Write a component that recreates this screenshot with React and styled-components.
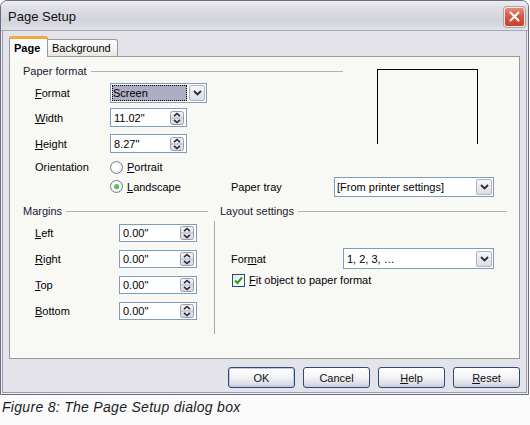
import React from 'react';
import styled, { createGlobalStyle, css } from 'styled-components';

const GlobalStyle = createGlobalStyle`
  html, body { margin: 0; padding: 0; background: #fafafa; }
  body {
    font-family: "Liberation Sans", Arial, sans-serif;
    font-size: 11px;
    color: #000;
  }
  #root { width: 530px; height: 425px; }
`;

const Page = styled.div`
  width: 530px;
  height: 425px;
  overflow: hidden;
  background: #fafafa;
`;

const Dialog = styled.div`
  width: 529px;
  height: 395px;
  box-sizing: border-box;
  border: 1px solid #6e6e82;
  border-radius: 7px 7px 0 0;
  background: #e3e3e9;
  display: flex;
  flex-direction: column;
  overflow: hidden;
  box-shadow: inset 0 0 0 1px #f0f0f4, inset 0 0 0 2px #9a9aac;
`;

const TitleBar = styled.div`
  height: 29px;
  flex: none;
  display: flex;
  align-items: center;
  justify-content: space-between;
  padding: 0 3px 0 7px;
  background: linear-gradient(#ececf2 0%, #dcdce5 30%, #d3d3dd 70%, #e2e2ea 100%);
  border-bottom: 1px solid #a6a6b6;
`;

const Title = styled.span`
  font-size: 13px;
  color: #101010;
  padding-top: 2px;
`;

const CloseButton = styled.div`
  width: 21px;
  height: 20px;
  margin-top: 2px;
  box-sizing: border-box;
  border: 1px solid #f4e8e4;
  border-radius: 3px;
  background: linear-gradient(#ea8a78, #d75a44 45%, #c4432e);
  display: flex;
  align-items: center;
  justify-content: center;
  box-shadow: 0 0 0 1px #b0a0a8;
`;

const Body = styled.div`
  flex: 1;
  display: flex;
  flex-direction: column;
  padding: 5px 8px 6px 8px;
  min-height: 0;
`;

const TabStrip = styled.div`
  display: flex;
  align-items: flex-end;
  height: 21px;
  margin-bottom: -1px;
  position: relative;
  z-index: 1;
`;

const Tab = styled.div`
  box-sizing: border-box;
  border: 1px solid #919b9c;
  border-bottom: none;
  padding-left: 4px;
  display: flex;
  align-items: center;
  ${(p) =>
    p.$active
      ? css`
          width: 39px;
          height: 21px;
          font-weight: bold;
          background: #fcfcfe;
          border-top: 3px solid #f2a93b;
          border-radius: 3px 3px 0 0;
          padding-bottom: 1px;
        `
      : css`
          width: 70px;
          height: 18px;
          border-left: none;
          background: linear-gradient(#ffffff, #f0f0ec 70%, #e6e6e0);
          border-radius: 0 3px 0 0;
          border-bottom: 1px solid #919b9c;
        `}
`;

const Panel = styled.div`
  flex: 1;
  box-sizing: border-box;
  border: 1px solid #919b9c;
  background: #f8f8f5;
  padding: 7px 0 0 13px;
  display: flex;
  flex-direction: column;
`;

const TopArea = styled.div`
  display: flex;
  align-items: flex-start;
`;

const Column = styled.div`
  width: ${(p) => p.$width}px;
  flex: none;
  display: flex;
  flex-direction: column;
  margin-left: ${(p) => p.$ml || 0}px;
`;

const SectionHeader = styled.div`
  height: 14px;
  display: flex;
  align-items: center;
  gap: 4px;
  padding-left: ${(p) => p.$pl || 0}px;
  color: #181830;
  white-space: nowrap;
  &::after {
    content: '';
    flex: 1;
    height: 1px;
    background: #b2b2ba;
    margin-top: 1px;
  }
`;

const Indent = styled.div`
  display: flex;
  flex-direction: column;
  padding-left: ${(p) => p.$pl ?? 12}px;
`;

const Row = styled.div`
  display: flex;
  align-items: center;
  height: ${(p) => p.$h}px;
  margin-top: ${(p) => p.$mt || 0}px;
`;

const Label = styled.span`
  width: ${(p) => p.$w}px;
  flex: none;
  white-space: nowrap;
`;

const Preview = styled.div`
  width: 101px;
  height: 75px;
  box-sizing: border-box;
  margin: 5px 0 0 34px;
  border: 1px solid #000;
  border-bottom: none;
`;

const LandscapeRow = styled.div`
  display: flex;
  align-items: center;
  height: 21px;
  padding-left: 12px;
`;

const BottomArea = styled.div`
  display: flex;
  margin-top: 7px;
`;

const LayoutBox = styled.div`
  margin-top: 3px;
  height: 113px;
  border-left: 1px solid #a8a8b0;
  padding-left: 16px;
  display: flex;
  flex-direction: column;
`;

const Field = styled.div`
  width: ${(p) => p.$w}px;
  height: ${(p) => p.$h}px;
  box-sizing: border-box;
  border: 1px solid #7f9db9;
  background: #fff;
  display: flex;
  align-items: center;
  flex: none;
`;

const FieldText = styled.span`
  flex: 1;
  padding-left: ${(p) => p.$pl ?? 3}px;
  white-space: nowrap;
  overflow: hidden;
`;

const FocusText = styled.span`
  flex: 1;
  align-self: stretch;
  margin: 1px;
  padding-left: 1px;
  display: flex;
  align-items: center;
  background: #adadc3;
  outline: 1px dotted #000;
  outline-offset: -1px;
`;

const DropButton = styled.div`
  width: 16px;
  height: 16px;
  margin: 0 1px;
  box-sizing: border-box;
  border: 1px solid #aeb2c8;
  border-radius: 2px;
  background: linear-gradient(#f6f6fa, #dcdce6);
  display: flex;
  align-items: center;
  justify-content: center;
  flex: none;
`;

const SpinBox = styled.div`
  width: 14px;
  height: 14px;
  margin-right: 2px;
  flex: none;
  display: flex;
`;

const RadioLabel = styled.label`
  display: flex;
  align-items: center;
  gap: 4px;
  width: ${(p) => p.$w || 'auto'};
  flex: none;
`;

const RadioCircle = styled.span`
  width: 13px;
  height: 13px;
  box-sizing: border-box;
  border-radius: 50%;
  border: 1px solid #7a7e90;
  background: radial-gradient(circle at 40% 40%, #ffffff 30%, #dcdce2 100%);
  display: flex;
  align-items: center;
  justify-content: center;
  &::after {
    content: '';
    display: ${(p) => (p.$checked ? 'block' : 'none')};
    width: 5px;
    height: 5px;
    border-radius: 50%;
    background: radial-gradient(circle at 40% 40%, #6fd56f, #1f9a1f);
  }
`;

const CheckRow = styled.label`
  display: flex;
  align-items: center;
  gap: 4px;
  height: 14px;
  margin-top: 4px;
  margin-left: 1px;
`;

const CheckBox = styled.span`
  width: 13px;
  height: 13px;
  box-sizing: border-box;
  border: 1px solid #1c5180;
  background: linear-gradient(135deg, #e8e8e0, #ffffff);
  display: flex;
  align-items: center;
  justify-content: center;
`;

const ButtonRow = styled.div`
  display: flex;
  justify-content: flex-end;
  gap: 8px;
  margin-top: 8px;
  height: 21px;
`;

const Button = styled.div`
  width: 67px;
  height: 21px;
  box-sizing: border-box;
  border: 1px solid #2c4a7c;
  border-radius: 3px;
  background: linear-gradient(#ffffff 0%, #f4f4f8 45%, #dcdce6 85%, #c8c8d8 100%);
  display: flex;
  align-items: center;
  justify-content: center;
  color: #111;
  ${(p) =>
    p.$default &&
    css`
      box-shadow: inset 0 0 0 1px #b8c8ec;
    `}
`;

const Caption = styled.div`
  margin-top: 4px;
  padding-left: 2px;
  font-style: italic;
  font-size: 14px;
  letter-spacing: 0.3px;
  color: #1a1a28;
  line-height: 16px;
`;

const Chevron = () => (
  <svg width="9" height="6" viewBox="0 0 9 6">
    <path d="M1 1 L4.5 4.5 L8 1" fill="none" stroke="#2a2a3a" strokeWidth="1.8" />
  </svg>
);

const SpinIcon = () => (
  <svg width="14" height="14" viewBox="0 0 14 14">
    <defs>
      <linearGradient id="spg" x1="0" y1="0" x2="0" y2="1">
        <stop offset="0" stopColor="#f4f4f8" />
        <stop offset="1" stopColor="#d6d6e0" />
      </linearGradient>
    </defs>
    <rect x="0.5" y="0.5" width="13" height="13" rx="2" fill="url(#spg)" stroke="#9c9cae" />
    <line x1="1" y1="7" x2="13" y2="7" stroke="#b4b4c4" />
    <path d="M4 5.2 L7 2.5 L10 5.2" fill="none" stroke="#2a2a3a" strokeWidth="1.6" />
    <path d="M4 8.8 L7 11.5 L10 8.8" fill="none" stroke="#2a2a3a" strokeWidth="1.6" />
  </svg>
);

const U = styled.span`
  text-decoration: underline;
  text-underline-offset: 1px;
`;

const Select = ({ w, h = 20, focused, pl, children }) => (
  <Field $w={w} $h={h}>
    {focused ? <FocusText>{children}</FocusText> : <FieldText $pl={pl}>{children}</FieldText>}
    <DropButton>
      <Chevron />
    </DropButton>
  </Field>
);

const SpinField = ({ w, h, value }) => (
  <Field $w={w} $h={h}>
    <FieldText>{value}</FieldText>
    <SpinBox>
      <SpinIcon />
    </SpinBox>
  </Field>
);

const margins = [
  { key: 'L', rest: 'eft' },
  { key: 'R', rest: 'ight' },
  { key: 'T', rest: 'op' },
  { key: 'B', rest: 'ottom' },
];

export default function App() {
  return (
    <Page>
      <GlobalStyle />
      <Dialog>
        <TitleBar>
          <Title>Page Setup</Title>
          <CloseButton>
            <svg width="11" height="11" viewBox="0 0 11 11">
              <path d="M1.5 1.5 L9.5 9.5 M9.5 1.5 L1.5 9.5" stroke="#fff" strokeWidth="2" strokeLinecap="round" />
            </svg>
          </CloseButton>
        </TitleBar>
        <Body>
          <TabStrip>
            <Tab $active>Page</Tab>
            <Tab>Background</Tab>
          </TabStrip>
          <Panel>
            <TopArea>
              <Column $width={320}>
                <SectionHeader>Paper format</SectionHeader>
                <Indent>
                  <Row $h={20} $mt={5}>
                    <Label $w={75}><U>F</U>ormat</Label>
                    <Select w={97} focused>Screen</Select>
                  </Row>
                  <Row $h={19} $mt={5}>
                    <Label $w={75}><U>W</U>idth</Label>
                    <SpinField w={77} h={19} value={'11.02"'} />
                  </Row>
                  <Row $h={19} $mt={7}>
                    <Label $w={75}><U>H</U>eight</Label>
                    <SpinField w={77} h={19} value={'8.27"'} />
                  </Row>
                  <Row $h={18} $mt={5}>
                    <Label $w={75}>Orientation</Label>
                    <RadioLabel>
                      <RadioCircle />
                      <span><U>P</U>ortrait</span>
                    </RadioLabel>
                  </Row>
                </Indent>
              </Column>
              <Preview />
            </TopArea>
            <LandscapeRow>
              <Label $w={75} />
              <RadioLabel $w="121px">
                <RadioCircle $checked />
                <span><U>L</U>andscape</span>
              </RadioLabel>
              <Label $w={103}>Paper tray</Label>
              <Select w={160} pl={2}>[From printer settings]</Select>
            </LandscapeRow>
            <BottomArea>
              <Column $width={185}>
                <SectionHeader>Margins</SectionHeader>
                <Indent>
                  {margins.map((m, i) => (
                    <Row key={m.key} $h={18} $mt={i === 0 ? 6 : 8}>
                      <Label $w={84}><U>{m.key}</U>{m.rest}</Label>
                      <SpinField w={78} h={18} value={'0.00"'} />
                    </Row>
                  ))}
                </Indent>
              </Column>
              <Column $width={293} $ml={6}>
                <SectionHeader $pl={6}>Layout settings</SectionHeader>
                <LayoutBox>
                  <Row $h={21} $mt={27}>
                    <Label $w={112}>For<U>m</U>at</Label>
                    <Select w={151} h={21}>1, 2, 3, …</Select>
                  </Row>
                  <CheckRow>
                    <CheckBox>
                      <svg width="9" height="9" viewBox="0 0 9 9">
                        <path d="M1 4.5 L3.5 7 L8 1.5" fill="none" stroke="#21a121" strokeWidth="2" />
                      </svg>
                    </CheckBox>
                    <span><U>F</U>it object to paper format</span>
                  </CheckRow>
                </LayoutBox>
              </Column>
            </BottomArea>
          </Panel>
          <ButtonRow>
            <Button $default>OK</Button>
            <Button>Cancel</Button>
            <Button><U>H</U>elp</Button>
            <Button><U>R</U>eset</Button>
          </ButtonRow>
        </Body>
      </Dialog>
      <Caption>Figure 8: The Page Setup dialog box</Caption>
    </Page>
  );
}
